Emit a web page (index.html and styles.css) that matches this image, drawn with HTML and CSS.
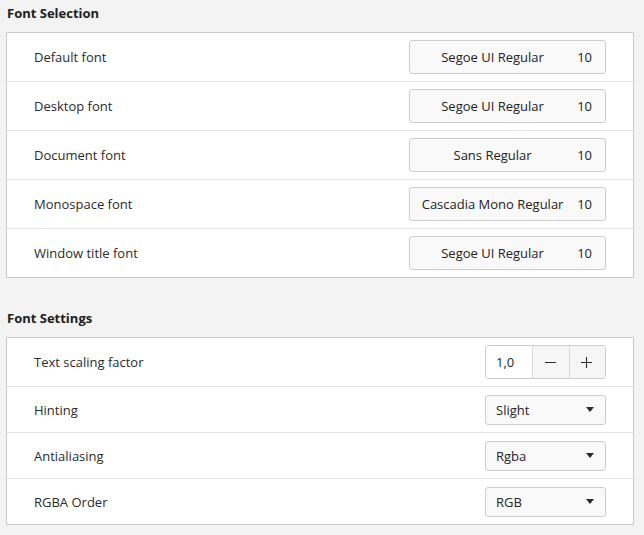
FILE: index.html
```html
<!DOCTYPE html>
<html>
<head>
<meta charset="utf-8">
<link rel="stylesheet" href="styles.css">
</head>
<body>
<section class="group">
  <h2 class="group-title">Font Selection</h2>
  <div class="frame">
    <div class="row"><span class="label">Default font</span><button class="font-btn"><span class="font-name">Segoe UI Regular</span><span class="font-size">10</span></button></div>
    <div class="row"><span class="label">Desktop font</span><button class="font-btn"><span class="font-name">Segoe UI Regular</span><span class="font-size">10</span></button></div>
    <div class="row"><span class="label">Document font</span><button class="font-btn"><span class="font-name">Sans Regular</span><span class="font-size">10</span></button></div>
    <div class="row"><span class="label">Monospace font</span><button class="font-btn"><span class="font-name">Cascadia Mono Regular</span><span class="font-size">10</span></button></div>
    <div class="row"><span class="label">Window title font</span><button class="font-btn"><span class="font-name">Segoe UI Regular</span><span class="font-size">10</span></button></div>
  </div>
</section>
<section class="group group-second">
  <h2 class="group-title">Font Settings</h2>
  <div class="frame">
    <div class="row"><span class="label">Text scaling factor</span>
      <div class="spin"><span class="spin-entry">1,0</span>
        <span class="spin-btn"><svg width="12" height="12" viewBox="0 0 12 12"><path d="M0 6.5H11" stroke="#2a2a2a" stroke-width="1.1"/></svg></span>
        <span class="spin-btn"><svg width="12" height="12" viewBox="0 0 12 12"><path d="M0 6.5H11M5.5 1V12" stroke="#2a2a2a" stroke-width="1.1"/></svg></span>
      </div>
    </div>
    <div class="row row-small"><span class="label">Hinting</span><div class="combo"><span>Slight</span><span class="arrow"></span></div></div>
    <div class="row row-small"><span class="label">Antialiasing</span><div class="combo"><span>Rgba</span><span class="arrow"></span></div></div>
    <div class="row row-small"><span class="label">RGBA Order</span><div class="combo"><span>RGB</span><span class="arrow"></span></div></div>
  </div>
</section>
</body>
</html>
```
FILE: styles.css
```css
html, body {
  margin: 0;
  padding: 0;
  background: #f3f3f3;
  font-family: "Open Sans", "Noto Sans", sans-serif;
  font-size: 13px;
  color: #252525;
}
.group {
  padding: 0 10px 0 6px;
}
.group-second {
  margin-top: 27px;
}
.group-title {
  margin: 0;
  height: 32px;
  line-height: 26px;
  padding-left: 1px;
  font-size: 13px;
  font-weight: 700;
  color: #202020;
}
.frame {
  background: #ffffff;
  border: 1px solid #c9c9c9;
}
.row {
  display: flex;
  align-items: center;
  justify-content: space-between;
  height: 48px;
  padding: 0 27px;
  border-top: 1px solid #e6e6e6;
}
.row:first-child {
  border-top: none;
}
.row-small {
  height: 45px;
}
.label {
  color: #2b2b2b;
}
.font-btn {
  display: flex;
  align-items: center;
  width: 197px;
  height: 34px;
  padding: 0 13px 0 10px;
  box-sizing: border-box;
  background: #f9f9f9;
  border: 1px solid #cdcdcd;
  border-radius: 3px;
  font: inherit;
  color: #222;
}
.font-name {
  flex: 1;
  text-align: center;
}
.font-size {
  margin-left: 12px;
}
.spin {
  display: flex;
  height: 34px;
  width: 121px;
  box-sizing: border-box;
  border: 1px solid #cdcdcd;
  border-radius: 3px;
  overflow: hidden;
}
.spin-entry {
  width: 46px;
  padding-left: 10px;
  box-sizing: border-box;
  background: #fff;
  display: flex;
  align-items: center;
}
.spin-btn {
  flex: 1;
  display: flex;
  align-items: center;
  justify-content: center;
  background: #f6f6f6;
  border-left: 1px solid #d8d8d8;
}
.combo {
  display: flex;
  align-items: center;
  justify-content: space-between;
  width: 121px;
  height: 30px;
  box-sizing: border-box;
  padding: 0 11px 0 10px;
  background: #f9f9f9;
  border: 1px solid #cdcdcd;
  border-radius: 3px;
}
.arrow {
  width: 0;
  height: 0;
  border-left: 4.5px solid transparent;
  border-right: 4.5px solid transparent;
  border-top: 5px solid #2a2a2a;
}
```
